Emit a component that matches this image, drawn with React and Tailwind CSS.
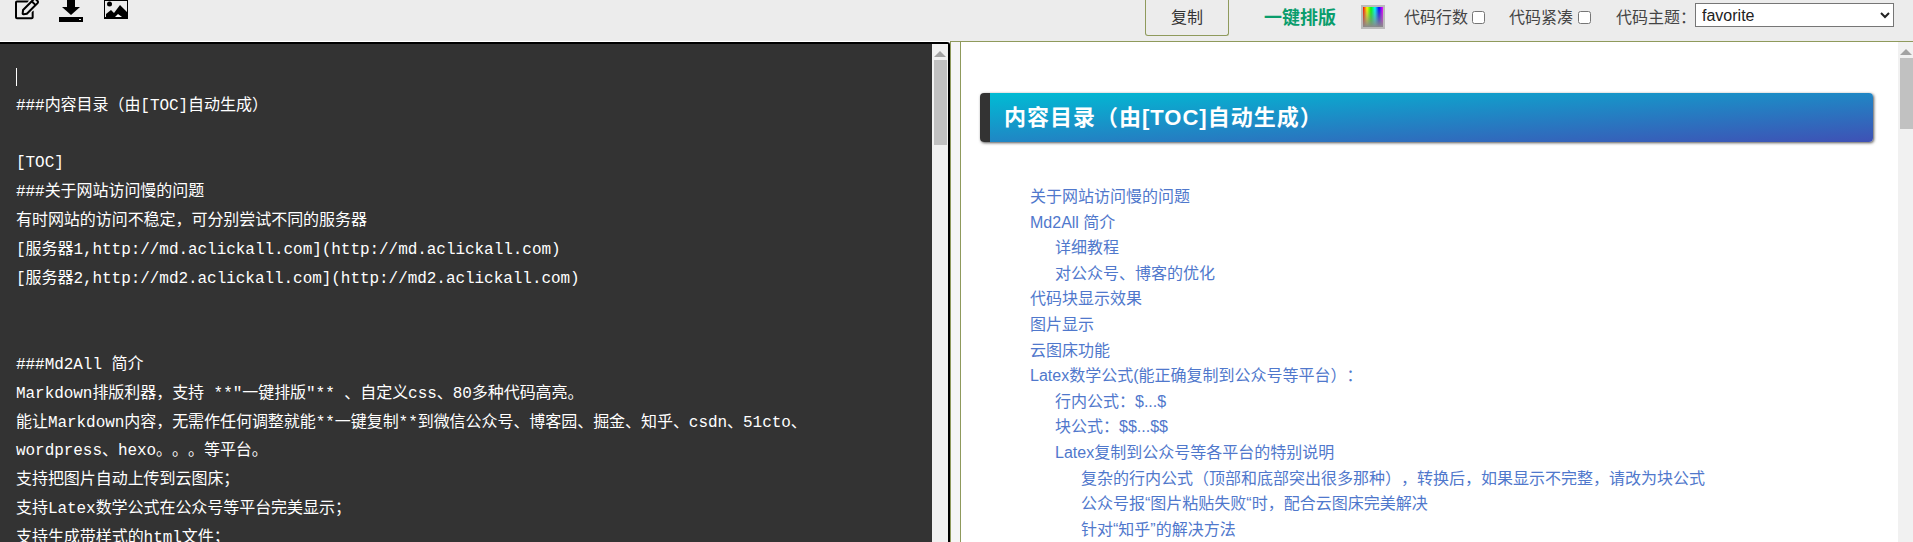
import { FaRegEdit } from 'react-icons/fa';

// left pane: raw markdown lines
const sourceLines = [
  '###内容目录（由[TOC]自动生成）',
  '',
  '[TOC]',
  '###关于网站访问慢的问题',
  '有时网站的访问不稳定，可分别尝试不同的服务器',
  '[服务器1,http://md.aclickall.com](http://md.aclickall.com)',
  '[服务器2,http://md2.aclickall.com](http://md2.aclickall.com)',
  '',
  '',
  '###Md2All 简介',
  'Markdown排版利器，支持 **"一键排版"** 、自定义css、80多种代码高亮。',
  '能让Markdown内容，无需作任何调整就能**一键复制**到微信公众号、博客园、掘金、知乎、csdn、51cto、',
  'wordpress、hexo。。。等平台。',
  '支持把图片自动上传到云图床；',
  '支持Latex数学公式在公众号等平台完美显示；',
  '支持生成带样式的html文件；',
];

// right pane: table of contents
const tocItems = [
  { text: '关于网站访问慢的问题', level: 0 },
  { text: 'Md2All 简介', level: 0 },
  { text: '详细教程', level: 1 },
  { text: '对公众号、博客的优化', level: 1 },
  { text: '代码块显示效果', level: 0 },
  { text: '图片显示', level: 0 },
  { text: '云图床功能', level: 0 },
  { text: 'Latex数学公式(能正确复制到公众号等平台）：', level: 0 },
  { text: '行内公式：$...$', level: 1 },
  { text: '块公式：$$...$$', level: 1 },
  { text: 'Latex复制到公众号等各平台的特别说明', level: 1 },
  { text: '复杂的行内公式（顶部和底部突出很多那种），转换后，如果显示不完整，请改为块公式', level: 2 },
  { text: '公众号报“图片粘贴失败“时，配合云图床完美解决', level: 2 },
  { text: '针对“知乎”的解决方法', level: 2 },
];

const indentClass = ['pl-0', 'pl-[25px]', 'pl-[51px]'];

function ScrollBar({ thumbClass }) {
  return (
    <div className="w-full h-full bg-[#f1f1f1] flex flex-col items-center">
      <svg width="12" height="6" viewBox="0 0 12 6" className="mt-[7px] shrink-0">
        <path d="M6 0 L12 6 L0 6 Z" fill="#a3a3a3" />
      </svg>
      <div className={thumbClass} />
    </div>
  );
}

export default function App() {
  return (
    <div className="h-[542px] w-[1913px] overflow-hidden bg-white text-[16px] [text-spacing-trim:space-all] font-['Liberation_Sans','Noto_Sans_CJK_SC',sans-serif]">
      {/* Toolbar */}
      <div className="h-[41px] bg-[#ececec] flex items-start overflow-hidden">
        <div className="flex items-start pl-[15px]">
          <FaRegEdit className="w-[24px] h-[23px] -mt-[3px] text-black" />
          <svg width="24" height="22" viewBox="0 0 24 22" className="ml-[20px]">
            <path d="M8 0 H16 V7 H21 L12 15 L3 7 H8 Z" fill="#000" />
            <path d="M0 17 H24 V22 H0 Z M20 19 V20 H22 V19 Z" fill="#000" fillRule="evenodd" />
          </svg>
          <svg width="24" height="19" viewBox="0 0 24 19" className="ml-[21px]">
            <path d="M0 0 H24 V19 H0 Z M1 1 V17 H23 V1 Z" fill="#000" fillRule="evenodd" />
            <circle cx="5.5" cy="4" r="2.5" fill="#000" />
            <path d="M2 17 L2 14 L7 10 L10 13 L16 5 L23 12 V17 Z" fill="#000" />
            <path d="M11 17 L14 14 L18 17 Z" fill="#fff" />
          </svg>
        </div>

        <div className="ml-auto flex items-start pr-[19px] text-[#444]">
          <button className="w-[84px] h-[36px] bg-[#ececec] border border-t-0 border-[#8f9a5c] rounded-b-[3px] text-[#333] text-[16px]">
            复制
          </button>
          <span className="ml-[35px] mt-[7px] font-bold text-[#0a9d6c] text-[18px] leading-[22px]">一键排版</span>
          <div className="ml-[25px] mt-[5px] w-[24px] h-[24px] border-2 border-[#bbb] bg-[linear-gradient(to_bottom,transparent,#8a8a8a),linear-gradient(to_right,#f00,#ff0,#0f0,#0ff,#00f,#f0f)]" />
          <span className="ml-[19px] mt-[6px] leading-[24px]">代码行数</span>
          <input type="checkbox" className="ml-[4px] mt-[11px] w-[13px] h-[13px]" />
          <span className="ml-[24px] mt-[6px] leading-[24px]">代码紧凑</span>
          <input type="checkbox" className="ml-[5px] mt-[11px] w-[13px] h-[13px]" />
          <span className="ml-[25px] mt-[6px] leading-[24px]">代码主题：</span>
          <select className="ml-[-1px] mt-[3px] w-[199px] h-[24px] bg-white border border-[#767676] text-[16px] text-[#222] pl-[2px]" defaultValue="favorite">
            <option value="favorite">favorite</option>
          </select>
        </div>
      </div>

      {/* Main panes */}
      <div className="h-[501px] flex">
        {/* Editor */}
        <div className="w-[950px] mt-px h-[500px] flex border-t-2 border-r-2 border-black rounded-tr-[3px]">
          <div className="w-[932px] bg-[#333] text-white pt-[19px] pl-[16px] font-['Liberation_Mono','Noto_Sans_CJK_SC',monospace] text-[16px] tracking-[-0.05px] leading-[28.8px] overflow-hidden whitespace-pre">
            <div className="h-[28.8px] flex items-center">
              <div className="w-px h-[18px] bg-white" />
            </div>
            {sourceLines.map((line, i) => (
              <div key={i} className="h-[28.8px]">{line}</div>
            ))}
          </div>
          <div className="w-[16px]">
            <ScrollBar thumbClass="mt-[3px] w-[13px] h-[85px] bg-[#c1c1c1]" />
          </div>
        </div>

        {/* Preview */}
        <div className="flex-1 flex border-t border-l border-[#8f9a5c]">
          <div className="w-[9px] bg-[#f5f5f5] border-r border-[#8f9a5c] box-content" />
          <div className="flex-1 bg-white pt-[51px] pl-[19px] pr-[25px] overflow-hidden">
            <h2 className="h-[49px] flex rounded-[4px] overflow-hidden shadow-[1px_1px_3px_#555] text-white font-bold text-[22px] tracking-[1px]">
              <div className="w-[10px] bg-[#333]" />
              <div className="flex-1 pl-[14px] leading-[49px] bg-[linear-gradient(to_bottom_right,#00bcd4,#3f51b5)]">
                内容目录（由[TOC]自动生成）
              </div>
            </h2>
            <ul className="mt-[42px] pl-[50px] text-[#5078cc] leading-[25.6px]">
              {tocItems.map((item, i) => (
                <li key={i} className={indentClass[item.level]}>{item.text}</li>
              ))}
            </ul>
          </div>
          <div className="w-[15px]">
            <ScrollBar thumbClass="mt-[3px] ml-[2px] w-[13px] h-[71px] bg-[#c1c1c1]" />
          </div>
        </div>
      </div>
    </div>
  );
}
